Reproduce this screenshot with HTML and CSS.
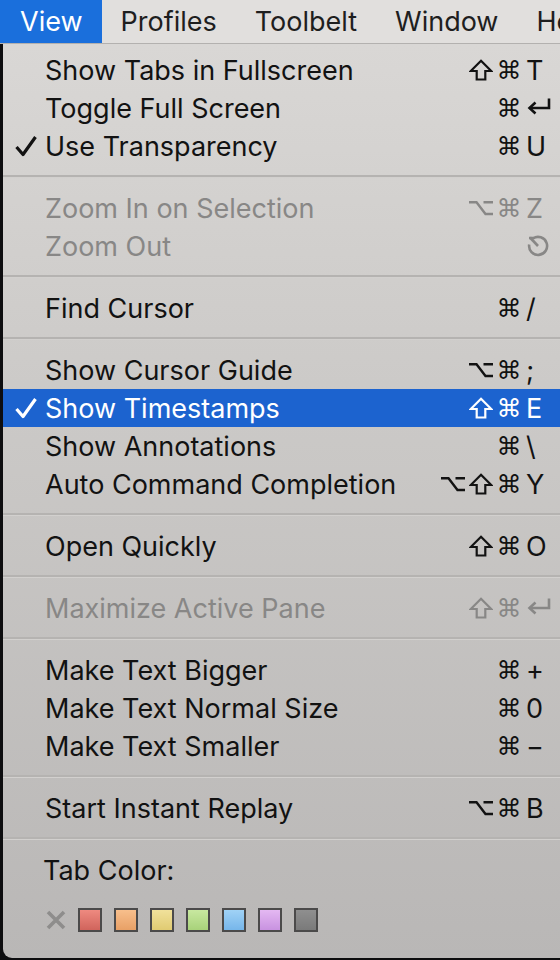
FILE: index.html
```html
<!DOCTYPE html>
<html>
<head>
<meta charset="utf-8">
<link rel="stylesheet" href="styles.css">
</head>
<body>
<div class="menubar">
  <span class="mb-item active">View</span>
  <span class="mb-item">Profiles</span>
  <span class="mb-item">Toolbelt</span>
  <span class="mb-item">Window</span>
  <span class="mb-item">He</span>
</div>
<div class="stage">
<div class="menu">
  <div class="item"><span class="check"></span><span class="label">Show Tabs in Fullscreen</span><span class="sc"><span class="mods"><span class="m"><svg viewBox="0 0 24 22" width="24" height="22"><path d="M12 1.8 L22.2 12 H16.3 V20.5 H7.7 V12 H1.8 Z" fill="none" stroke="currentColor" stroke-width="2.2" stroke-linejoin="miter"/></svg></span><span class="m">⌘</span></span><span class="key">T</span></span></div>
  <div class="item"><span class="check"></span><span class="label">Toggle Full Screen</span><span class="sc"><span class="mods"><span class="m">⌘</span></span><span class="key"><svg class="ret" viewBox="0 0 26 18" width="26" height="18"><path d="M23 1.5 V11 H4" fill="none" stroke="currentColor" stroke-width="2.6"/><path d="M9.5 5.5 L3.5 11 L9.5 16.5" fill="none" stroke="currentColor" stroke-width="2.6"/></svg></span></span></div>
  <div class="item"><span class="check"><svg viewBox="0 0 24 22" width="24" height="22"><path d="M2.5 12 L9 19.5 L21.5 2" fill="none" stroke="currentColor" stroke-width="3.2" stroke-linejoin="round"/></svg></span><span class="label">Use Transparency</span><span class="sc"><span class="mods"><span class="m">⌘</span></span><span class="key">U</span></span></div>
  <div class="sep"></div>
  <div class="item disabled"><span class="check"></span><span class="label">Zoom In on Selection</span><span class="sc"><span class="mods"><span class="m"><svg viewBox="0 0 26 16" width="26" height="16"><path d="M1 2.2 H8.5 L17.5 14 H25 M15.5 2.2 H25" fill="none" stroke="currentColor" stroke-width="2.4"/></svg></span><span class="m">⌘</span></span><span class="key">Z</span></span></div>
  <div class="item disabled"><span class="check"></span><span class="label">Zoom Out</span><span class="sc"><span class="mods"></span><span class="key"><svg class="restore" viewBox="0 0 24 24" width="24" height="24"><path d="M7 4.5 A9 9 0 1 1 3.2 10.5" fill="none" stroke="currentColor" stroke-width="2.6"/><path d="M4 3.5 L12 12" fill="none" stroke="currentColor" stroke-width="2.6"/><path d="M3 4 H8" fill="none" stroke="currentColor" stroke-width="2.6"/></svg></span></span></div>
  <div class="sep"></div>
  <div class="item"><span class="check"></span><span class="label">Find Cursor</span><span class="sc"><span class="mods"><span class="m">⌘</span></span><span class="key">/</span></span></div>
  <div class="sep"></div>
  <div class="item"><span class="check"></span><span class="label">Show Cursor Guide</span><span class="sc"><span class="mods"><span class="m"><svg viewBox="0 0 26 16" width="26" height="16"><path d="M1 2.2 H8.5 L17.5 14 H25 M15.5 2.2 H25" fill="none" stroke="currentColor" stroke-width="2.4"/></svg></span><span class="m">⌘</span></span><span class="key">;</span></span></div>
  <div class="item selected"><span class="check"><svg viewBox="0 0 24 22" width="24" height="22"><path d="M2.5 12 L9 19.5 L21.5 2" fill="none" stroke="currentColor" stroke-width="3.2" stroke-linejoin="round"/></svg></span><span class="label">Show Timestamps</span><span class="sc"><span class="mods"><span class="m"><svg viewBox="0 0 24 22" width="24" height="22"><path d="M12 1.8 L22.2 12 H16.3 V20.5 H7.7 V12 H1.8 Z" fill="none" stroke="currentColor" stroke-width="2.2"/></svg></span><span class="m">⌘</span></span><span class="key">E</span></span></div>
  <div class="item"><span class="check"></span><span class="label">Show Annotations</span><span class="sc"><span class="mods"><span class="m">⌘</span></span><span class="key">\</span></span></div>
  <div class="item"><span class="check"></span><span class="label">Auto Command Completion</span><span class="sc"><span class="mods"><span class="m"><svg viewBox="0 0 26 16" width="26" height="16"><path d="M1 2.2 H8.5 L17.5 14 H25 M15.5 2.2 H25" fill="none" stroke="currentColor" stroke-width="2.4"/></svg></span><span class="m"><svg viewBox="0 0 24 22" width="24" height="22"><path d="M12 1.8 L22.2 12 H16.3 V20.5 H7.7 V12 H1.8 Z" fill="none" stroke="currentColor" stroke-width="2.2"/></svg></span><span class="m">⌘</span></span><span class="key">Y</span></span></div>
  <div class="sep"></div>
  <div class="item"><span class="check"></span><span class="label">Open Quickly</span><span class="sc"><span class="mods"><span class="m"><svg viewBox="0 0 24 22" width="24" height="22"><path d="M12 1.8 L22.2 12 H16.3 V20.5 H7.7 V12 H1.8 Z" fill="none" stroke="currentColor" stroke-width="2.2"/></svg></span><span class="m">⌘</span></span><span class="key">O</span></span></div>
  <div class="sep"></div>
  <div class="item disabled"><span class="check"></span><span class="label">Maximize Active Pane</span><span class="sc"><span class="mods"><span class="m"><svg viewBox="0 0 24 22" width="24" height="22"><path d="M12 1.8 L22.2 12 H16.3 V20.5 H7.7 V12 H1.8 Z" fill="none" stroke="currentColor" stroke-width="2.2"/></svg></span><span class="m">⌘</span></span><span class="key"><svg class="ret" viewBox="0 0 26 18" width="26" height="18"><path d="M23 1.5 V11 H4" fill="none" stroke="currentColor" stroke-width="2.6"/><path d="M9.5 5.5 L3.5 11 L9.5 16.5" fill="none" stroke="currentColor" stroke-width="2.6"/></svg></span></span></div>
  <div class="sep"></div>
  <div class="item"><span class="check"></span><span class="label">Make Text Bigger</span><span class="sc"><span class="mods"><span class="m">⌘</span></span><span class="key">+</span></span></div>
  <div class="item"><span class="check"></span><span class="label">Make Text Normal Size</span><span class="sc"><span class="mods"><span class="m">⌘</span></span><span class="key">0</span></span></div>
  <div class="item"><span class="check"></span><span class="label">Make Text Smaller</span><span class="sc"><span class="mods"><span class="m">⌘</span></span><span class="key">−</span></span></div>
  <div class="sep"></div>
  <div class="item"><span class="check"></span><span class="label">Start Instant Replay</span><span class="sc"><span class="mods"><span class="m"><svg viewBox="0 0 26 16" width="26" height="16"><path d="M1 2.2 H8.5 L17.5 14 H25 M15.5 2.2 H25" fill="none" stroke="currentColor" stroke-width="2.4"/></svg></span><span class="m">⌘</span></span><span class="key">B</span></span></div>
  <div class="sep"></div>
  <div class="tabcolor">Tab Color:</div>
  <div class="swatches">
    <span class="none"><svg viewBox="0 0 20 20" width="20" height="20"><path d="M2 2 L18 18 M18 2 L2 18" fill="none" stroke="currentColor" stroke-width="3.6"/></svg></span>
    <span class="sw red"></span>
    <span class="sw orange"></span>
    <span class="sw yellow"></span>
    <span class="sw green"></span>
    <span class="sw blue"></span>
    <span class="sw purple"></span>
    <span class="sw grey"></span>
  </div>
</div>
</div>
</body>
</html>
```

FILE: styles.css
```css
html, body {
  margin: 0;
  padding: 0;
  width: 560px;
  height: 960px;
  overflow: hidden;
  background: #0d0d0f;
  font-family: Inter, "Noto Sans", "DejaVu Sans", sans-serif;
}

.menubar {
  height: 43px;
  display: flex;
  align-items: center;
  background: #e1dfdd;
  border-bottom: 1px solid #b3b1af;
  white-space: nowrap;
  overflow: hidden;
}

.mb-item {
  height: 43px;
  line-height: 43px;
  padding: 0 19px;
  font-size: 27px;
  color: #1e1e1e;
}

.mb-item.active {
  background: #1a6fdc;
  color: #ffffff;
  padding-left: 20px;
}

.stage {
  height: 916px;
  padding-left: 3px;
}

.menu {
  height: 914px;
  padding-top: 7px;
  box-sizing: border-box;
  background: linear-gradient(180deg, #d9d7d5 0%, #cbc9c7 40%, #b9b7b6 100%);
  border-bottom-left-radius: 9px;
  overflow: hidden;
}

.item {
  height: 38px;
  display: flex;
  align-items: center;
  font-size: 27px;
  color: #121212;
  white-space: nowrap;
}

.item.disabled {
  color: #888786;
}

.item.selected {
  background: #1c63cf;
  color: #ffffff;
  margin-left: -3px;
  padding-left: 3px;
}

.check {
  width: 42px;
  flex: none;
  display: flex;
  align-items: center;
  padding-left: 11px;
  box-sizing: border-box;
}

.label {
  flex: 1;
}

.sc {
  display: flex;
  align-items: center;
  flex: none;
}

.mods {
  display: flex;
  justify-content: flex-end;
  align-items: center;
}

.m {
  width: 28px;
  height: 38px;
  display: flex;
  align-items: center;
  justify-content: center;
  font-family: "DejaVu Sans", sans-serif;
  font-size: 25px;
}

.key {
  width: 34px;
  margin-left: 3px;
  display: flex;
  align-items: center;
  height: 38px;
}

.ret {
  margin-top: -4px;
}

.sep {
  height: 2px;
  margin: 10px 0 11px;
  background: #b5b3b1;
  border-bottom: 1px solid #d2d0ce;
}

.tabcolor {
  height: 38px;
  line-height: 40px;
  padding-left: 40px;
  font-size: 27px;
  color: #121212;
}

.swatches {
  display: flex;
  align-items: center;
  margin-top: 19px;
  height: 24px;
  padding-left: 43px;
  gap: 12px;
}

.none {
  width: 20px;
  height: 24px;
  display: flex;
  align-items: center;
  justify-content: center;
  color: #8e8d8c;
}

.sw {
  width: 24px;
  height: 24px;
  box-sizing: border-box;
  border: 2px solid #4b4a4a;
}

.red { background: linear-gradient(#ee8a80, #d0645c); }
.orange { background: linear-gradient(#f8bf8c, #e8a066); }
.yellow { background: linear-gradient(#f1e19b, #e0cb72); }
.green { background: linear-gradient(#c8e8a0, #a8d27a); }
.blue { background: linear-gradient(#a0d2f6, #76b6ea); }
.purple { background: linear-gradient(#e4b8f2, #c892e0); }
.grey { background: linear-gradient(#8f8f8f, #7a7a7a); }
```
